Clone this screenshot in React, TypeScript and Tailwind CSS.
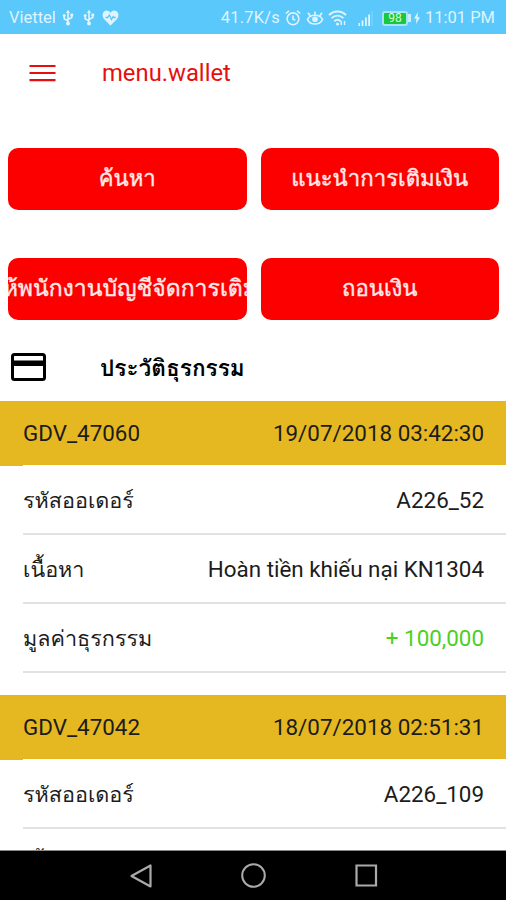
import React from 'react';

interface RowProps {
  label: string;
  value: string;
  valueClass?: string;
}

interface Transaction {
  id: string;
  date: string;
  rows: RowProps[];
}

const transactions: Transaction[] = [
  {
    id: 'GDV_47060',
    date: '19/07/2018 03:42:30',
    rows: [
      { label: 'รหัสออเดอร์', value: 'A226_52' },
      { label: 'เนื้อหา', value: 'Hoàn tiền khiếu nại KN1304' },
      { label: 'มูลค่าธุรกรรม', value: '+ 100,000', valueClass: 'text-[#4cd01f]' },
    ],
  },
  {
    id: 'GDV_47042',
    date: '18/07/2018 02:51:31',
    rows: [
      { label: 'รหัสออเดอร์', value: 'A226_109' },
      { label: 'เนื้อหา', value: '' },
    ],
  },
];

const UsbIcon: React.FC = () => (
  <svg width="12" height="18" viewBox="0 0 12 18" fill="none" stroke="currentColor" strokeWidth="1.6">
    <path d="M6 3v11M6 12L2.2 9.8V7M6 10.5l3.8-2V6" />
    <path d="M6 .8L3.9 4h4.2z" fill="currentColor" stroke="none" />
    <circle cx="6" cy="14.5" r="2" fill="currentColor" stroke="none" />
    <circle cx="2.2" cy="6.6" r="1.5" fill="currentColor" stroke="none" />
    <path d="M8.3 4.6h2.9v2.7H8.3z" fill="currentColor" stroke="none" />
  </svg>
);

const StatusBar: React.FC = () => (
  <div className="flex h-[34px] shrink-0 items-center justify-between bg-[#5ac8fb] pl-[9px] pr-[11px] text-[16.5px] text-[#dff4ff]">
    <div className="flex items-center pt-[2px]">
      <span className="w-[48px] whitespace-nowrap">Viettel</span>
      <span className="ml-[5px]"><UsbIcon /></span>
      <span className="ml-[9px]"><UsbIcon /></span>
      <svg className="ml-[7px]" width="17" height="16" viewBox="0 0 17 16">
        <path d="M8.5 15.5L2 9C-.5 6 .3 1 4.5.6c2 0 3.3 1 4 2.3C9.2 1.6 10.5.6 12.5.6 16.7 1 17.5 6 15 9z" fill="currentColor" />
        <path d="M3.5 7.5h2.2l1.6-2.5 2.2 4.5 1.7-3 1 1h1.5" fill="none" stroke="#5ac8fb" strokeWidth="1.3" />
      </svg>
    </div>
    <div className="flex items-center pt-[2px]">
      <span className="w-[60px] whitespace-nowrap text-right tracking-[0.2px]">41.7K/s</span>
      <svg className="ml-[5px]" width="16" height="16" viewBox="0 0 16 16" fill="none" stroke="currentColor" strokeWidth="1.6">
        <circle cx="8" cy="8.8" r="5.9" />
        <path d="M8 5.5V9l2.3 1.3M.8 3.5L4 .9M15.2 3.5L12 .9" />
      </svg>
      <svg className="ml-[5px]" width="18" height="16" viewBox="0 0 18 16" fill="none" stroke="currentColor" strokeWidth="1.7">
        <path d="M1.5 9.5C4 3.8 14 3.8 16.5 9.5 14 15.5 4 15.5 1.5 9.5z" />
        <circle cx="9" cy="9.3" r="2.8" fill="currentColor" stroke="none" />
        <path d="M9 5V1.5M4.3 6L2 2.8M13.7 6L16 2.8" />
      </svg>
      <svg className="ml-[4px]" width="20" height="16" viewBox="0 0 20 16" fill="none" stroke="currentColor" strokeWidth="1.9">
        <path d="M1 5.2C5.5.3 13.5.3 18 5.2M3.6 8.2c3.5-3.5 8.3-3.5 11.8 0M6.3 11.2c2-1.8 4.4-1.8 6.4 0" />
        <circle cx="9.5" cy="14" r="1.5" fill="currentColor" stroke="none" />
        <path d="M13.2 11v4M16.5 11v4" strokeWidth="1.4" />
      </svg>
      <svg className="ml-[10px]" width="15" height="15" viewBox="0 0 15 15" fill="currentColor">
        <path d="M.5 12h1.5v3H.5zM3.6 9.5h1.8V15H3.6zM7 6.5h1.8V15H7zM10.2 3.5H12V15h-1.8z" />
        <path d="M13.5 0h1v15h-1z" opacity=".35" />
      </svg>
      <div className="ml-[9px] flex h-[15px] w-[26px] items-center justify-center rounded-[3px] border-2 border-[#a8e3f5] bg-[#15c83c] text-[12px] leading-none text-[#dcffd8]">
        98
      </div>
      <div className="h-[8px] w-[3px] bg-[#c8edfb]" />
      <svg className="ml-[3px]" width="6" height="12" viewBox="0 0 6 12" fill="currentColor">
        <path d="M4 0L0 6.5h2.5L2 12l4-6.8H3.5z" />
      </svg>
      <span className="ml-[4px] w-[71px] whitespace-nowrap text-right">11:01 PM</span>
    </div>
  </div>
);

const ActionButton: React.FC<{ text: string; textClass?: string }> = ({ text, textClass = '' }) => (
  <button className="flex h-[62px] min-w-0 items-center justify-center overflow-hidden rounded-[10px] bg-[#fc0000] text-[22.2px] font-medium text-[#ffe9e9] [-webkit-text-stroke:0.4px_#ffe9e9]">
    <span className={`shrink-0 whitespace-nowrap ${textClass}`}>{text}</span>
  </button>
);

const Row: React.FC<RowProps> = ({ label, value, valueClass = '' }) => (
  <div className="ml-[23px] flex h-[69px] shrink-0 items-center justify-between border-b-2 border-[#e2e2e2] pr-[22px] pt-[2px]">
    <span className="pt-[2px] text-[21.6px]">{label}</span>
    <span className={valueClass}>{value}</span>
  </div>
);

const App: React.FC = () => (
  <div className="flex h-[900px] w-[506px] flex-col overflow-hidden bg-white font-['Roboto','Noto_Sans','Loma'] text-[#1c1c1c]">
    <StatusBar />
    <header className="flex h-[78px] shrink-0 items-center pl-[29px] text-[#e60f0f]">
      <svg width="27" height="18" viewBox="0 0 27 18" stroke="currentColor" strokeWidth="2.2">
        <path d="M.5 2h26M.5 9h26M.5 16.2h26" />
      </svg>
      <h1 className="ml-[46px] pt-[2px] text-[23.8px]">menu.wallet</h1>
    </header>
    <div className="mt-[36px] grid shrink-0 grid-cols-2 gap-x-[14px] gap-y-[48px] pl-[8px] pr-[7px]">
      <ActionButton text="ค้นหา" />
      <ActionButton text="แนะนำการเติมเงิน" />
      <ActionButton text="ขอให้พนักงานบัญชีจัดการเติมเงิน" textClass="text-[23px]" />
      <ActionButton text="ถอนเงิน" />
    </div>
    <div className="flex h-[81px] shrink-0 items-center pl-[11px] pt-[13px] text-black">
      <svg width="35" height="28" viewBox="0 0 35 28">
        <rect x="1.5" y="1.5" width="32" height="25" rx="2" fill="none" stroke="currentColor" strokeWidth="3" />
        <path d="M1 7.5h33V13H1z" fill="currentColor" />
      </svg>
      <h2 className="ml-[54px] pt-[4px] text-[22.6px] font-bold">ประวัติธุรกรรม</h2>
    </div>
    <main className="min-h-0 grow overflow-hidden text-[22.4px]">
      {transactions.map((t) => (
        <section key={t.id} className="mb-[22px]">
          <div className="bg-linear-to-r from-[#e5b822] from-[23px] to-white to-[23px] pb-px">
            <div className="flex h-[64px] items-center justify-between bg-[#e5b822] pl-[23px] pr-[22px] pt-[2px]">
              <span>{t.id}</span>
              <span>{t.date}</span>
            </div>
          </div>
          {t.rows.map((r) => (
            <Row key={r.label} {...r} />
          ))}
        </section>
      ))}
    </main>
    <nav className="flex h-[50px] shrink-0 items-center justify-center gap-[89px] border-t border-[#888] bg-black text-[#aaa]">
      <svg width="23" height="24" viewBox="0 0 23 24" fill="none" stroke="currentColor" strokeWidth="2.2" strokeLinejoin="round">
        <path d="M2.5 12L21.5 1.5v21z" />
      </svg>
      <svg width="25" height="25" viewBox="0 0 25 25" fill="none" stroke="currentColor" strokeWidth="2">
        <circle cx="12.5" cy="12.5" r="11.3" />
      </svg>
      <svg width="23" height="23" viewBox="0 0 23 23" fill="none" stroke="currentColor" strokeWidth="2.2">
        <path d="M1.5 1.5h19.5v20H1.5z" />
      </svg>
    </nav>
  </div>
);

export default App;
